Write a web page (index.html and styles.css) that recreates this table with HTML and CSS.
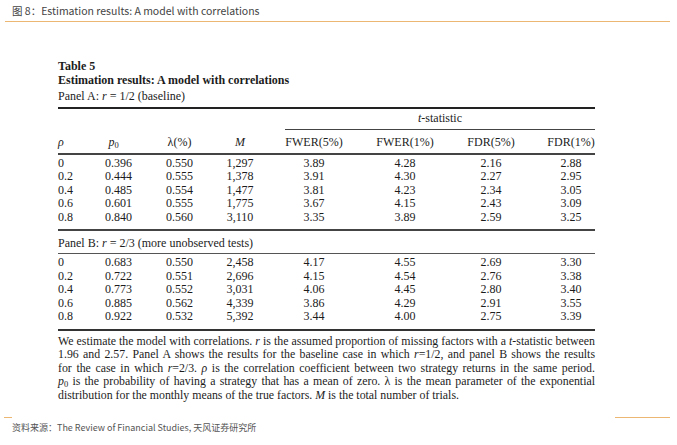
FILE: index.html
```html
<!DOCTYPE html>
<html lang="zh-CN">
<head>
<meta charset="utf-8">
<title>图 8</title>
<link rel="stylesheet" href="styles.css">
</head>
<body>
<div class="page">
  <div class="fig-title">图 8：Estimation results: A model with correlations</div>
  <div class="fig-rule"></div>

  <div class="tbl">
    <div class="t-label">Table 5</div>
    <div class="t-label">Estimation results: A model with correlations</div>
    <div class="panel panel-a">Panel A: <i>r</i> = 1/2 (baseline)</div>
    <div class="rule thick dark"></div>
    <div class="tstat">
      <div class="tstat-text"><i>t</i>-statistic</div>
      <div class="rule thin"></div>
    </div>
    <div class="row head">
      <div class="c1"><i>ρ</i></div>
      <div class="c2 hp"><i>p</i><sub>0</sub></div>
      <div class="c3">λ(%)</div>
      <div class="c4"><i>M</i></div>
      <div class="c5">FWER(5%)</div>
      <div class="c6">FWER(1%)</div>
      <div class="c7">FDR(5%)</div>
      <div class="c8">FDR(1%)</div>
    </div>
    <div class="rule thick after-head"></div>
    <div class="body">
      <div class="row"><div class="c1">0</div><div class="c2">0.396</div><div class="c3">0.550</div><div class="c4">1,297</div><div class="c5">3.89</div><div class="c6">4.28</div><div class="c7">2.16</div><div class="c8">2.88</div></div>
      <div class="row"><div class="c1">0.2</div><div class="c2">0.444</div><div class="c3">0.555</div><div class="c4">1,378</div><div class="c5">3.91</div><div class="c6">4.30</div><div class="c7">2.27</div><div class="c8">2.95</div></div>
      <div class="row"><div class="c1">0.4</div><div class="c2">0.485</div><div class="c3">0.554</div><div class="c4">1,477</div><div class="c5">3.81</div><div class="c6">4.23</div><div class="c7">2.34</div><div class="c8">3.05</div></div>
      <div class="row"><div class="c1">0.6</div><div class="c2">0.601</div><div class="c3">0.555</div><div class="c4">1,775</div><div class="c5">3.67</div><div class="c6">4.15</div><div class="c7">2.43</div><div class="c8">3.09</div></div>
      <div class="row"><div class="c1">0.8</div><div class="c2">0.840</div><div class="c3">0.560</div><div class="c4">3,110</div><div class="c5">3.35</div><div class="c6">3.89</div><div class="c7">2.59</div><div class="c8">3.25</div></div>
    </div>
    <div class="rule thick after-body"></div>
    <div class="panel panel-b">Panel B: <i>r</i> = 2/3 (more unobserved tests)</div>
    <div class="rule thin after-panel"></div>
    <div class="body body-b">
      <div class="row"><div class="c1">0</div><div class="c2">0.683</div><div class="c3">0.550</div><div class="c4">2,458</div><div class="c5">4.17</div><div class="c6">4.55</div><div class="c7">2.69</div><div class="c8">3.30</div></div>
      <div class="row"><div class="c1">0.2</div><div class="c2">0.722</div><div class="c3">0.551</div><div class="c4">2,696</div><div class="c5">4.15</div><div class="c6">4.54</div><div class="c7">2.76</div><div class="c8">3.38</div></div>
      <div class="row"><div class="c1">0.4</div><div class="c2">0.773</div><div class="c3">0.552</div><div class="c4">3,031</div><div class="c5">4.06</div><div class="c6">4.45</div><div class="c7">2.80</div><div class="c8">3.40</div></div>
      <div class="row"><div class="c1">0.6</div><div class="c2">0.885</div><div class="c3">0.562</div><div class="c4">4,339</div><div class="c5">3.86</div><div class="c6">4.29</div><div class="c7">2.91</div><div class="c8">3.55</div></div>
      <div class="row"><div class="c1">0.8</div><div class="c2">0.922</div><div class="c3">0.532</div><div class="c4">5,392</div><div class="c5">3.44</div><div class="c6">4.00</div><div class="c7">2.75</div><div class="c8">3.39</div></div>
    </div>
    <div class="rule thick after-b"></div>
    <div class="caption">
      <span class="ln">We estimate the model with correlations. <i>r</i> is the assumed proportion of missing factors with a <i>t</i>-statistic between</span>
      <span class="ln">1.96 and 2.57. Panel A shows the results for the baseline case in which <i>r</i>=1/2, and panel B shows the results</span>
      <span class="ln">for the case in which <i>r</i>=2/3. <i>ρ</i> is the correlation coefficient between two strategy returns in the same period.</span>
      <span class="ln"><i>p</i><sub>0</sub> is the probability of having a strategy that has a mean of zero. λ is the mean parameter of the exponential</span>
      <span class="ln last">distribution for the monthly means of the true factors. <i>M</i> is the total number of trials.</span>
    </div>
  </div>

  <div class="foot-rules">
    <div class="foot-left"></div>
    <div class="foot-right"></div>
  </div>
  <div class="source">资料来源：The Review of Financial Studies, 天风证券研究所</div>
</div>
</body>
</html>
```

FILE: styles.css
```css
html, body {
  margin: 0;
  padding: 0;
  background: #ffffff;
}

.page {
  width: 677px;
  height: 445px;
  overflow: hidden;
  position: relative;
}

.fig-title {
  font-family: "Noto Sans CJK SC", "Noto Sans", sans-serif;
  font-size: 10.5px;
  line-height: 12px;
  color: #444444;
  padding: 5px 0 0 12px;
  height: 16px;
  box-sizing: border-box;
  white-space: nowrap;
}

.fig-rule {
  margin: 5px 7px 0 5px;
  height: 1px;
  background: #ebb773;
}

.tbl {
  margin: 37px 0 0 58px;
  width: 537px;
  font-family: "Liberation Serif", "Times New Roman", serif;
  font-size: 12px;
  color: #1c1c1c;
}

.t-label {
  font-weight: bold;
  line-height: 14px;
}

.panel {
  line-height: 14px;
}

.panel-a {
  margin-top: 2px;
}

.rule {
  background: #333333;
}

.rule.thick {
  height: 2px;
}

.rule.thin {
  height: 1px;
}

.rule.dark {
  background: #222222;
  margin-top: 4px;
}

.tstat {
  margin-left: 227px;
}

.tstat-text {
  text-align: center;
  line-height: 14px;
  margin-top: 2px;
}

.tstat .rule.thin {
  margin-top: 4px;
  height: 1px;
  background: #444444;
}

.row {
  display: grid;
  grid-template-columns: 30px 61px 61px 60px 88px 94px 78px 65px;
  line-height: 13.5px;
  white-space: nowrap;
}

.row.head {
  margin-top: 5px;
  line-height: 14px;
}

.row .c1 {
  text-align: left;
}

.row .c2, .row .c3, .row .c4, .row .c5, .row .c6, .row .c7 {
  text-align: center;
}

.row .c8 {
  text-align: center;
  padding-left: 17px;
}

.row .hp {
  padding-right: 10px;
}

sub {
  font-size: 8.5px;
  line-height: 0;
  vertical-align: -2px;
}

.rule.after-head {
  margin-top: 4px;
  background: #444444;
}

.body {
  margin-top: 1.5px;
}

.rule.after-body {
  margin-top: 5px;
  background: #444444;
}

.panel-b {
  margin-top: 5px;
}

.rule.after-panel {
  margin-top: 3px;
  background: #555555;
}

.body-b {
  margin-top: 2px;
}

.rule.after-b {
  margin-top: 5.5px;
  background: #333333;
}

.caption {
  margin-top: 3.5px;
  font-size: 11.85px;
  line-height: 13.5px;
  color: #1c1c1c;
}

.caption .ln {
  display: block;
  text-align: justify;
  text-align-last: justify;
  white-space: nowrap;
}

.caption .ln.last {
  text-align-last: left;
}

.foot-rules {
  display: flex;
  justify-content: space-between;
  margin-top: 15px;
  padding: 0 7px 0 4px;
}

.foot-left {
  width: 8px;
  height: 1px;
  background: #ebb773;
}

.foot-right {
  width: 55px;
  height: 1px;
  background: #ebb773;
}

.source {
  font-family: "Noto Sans CJK SC", "Noto Sans", sans-serif;
  font-size: 9px;
  line-height: 11px;
  color: #555555;
  padding: 4px 0 0 12px;
  white-space: nowrap;
}
```
